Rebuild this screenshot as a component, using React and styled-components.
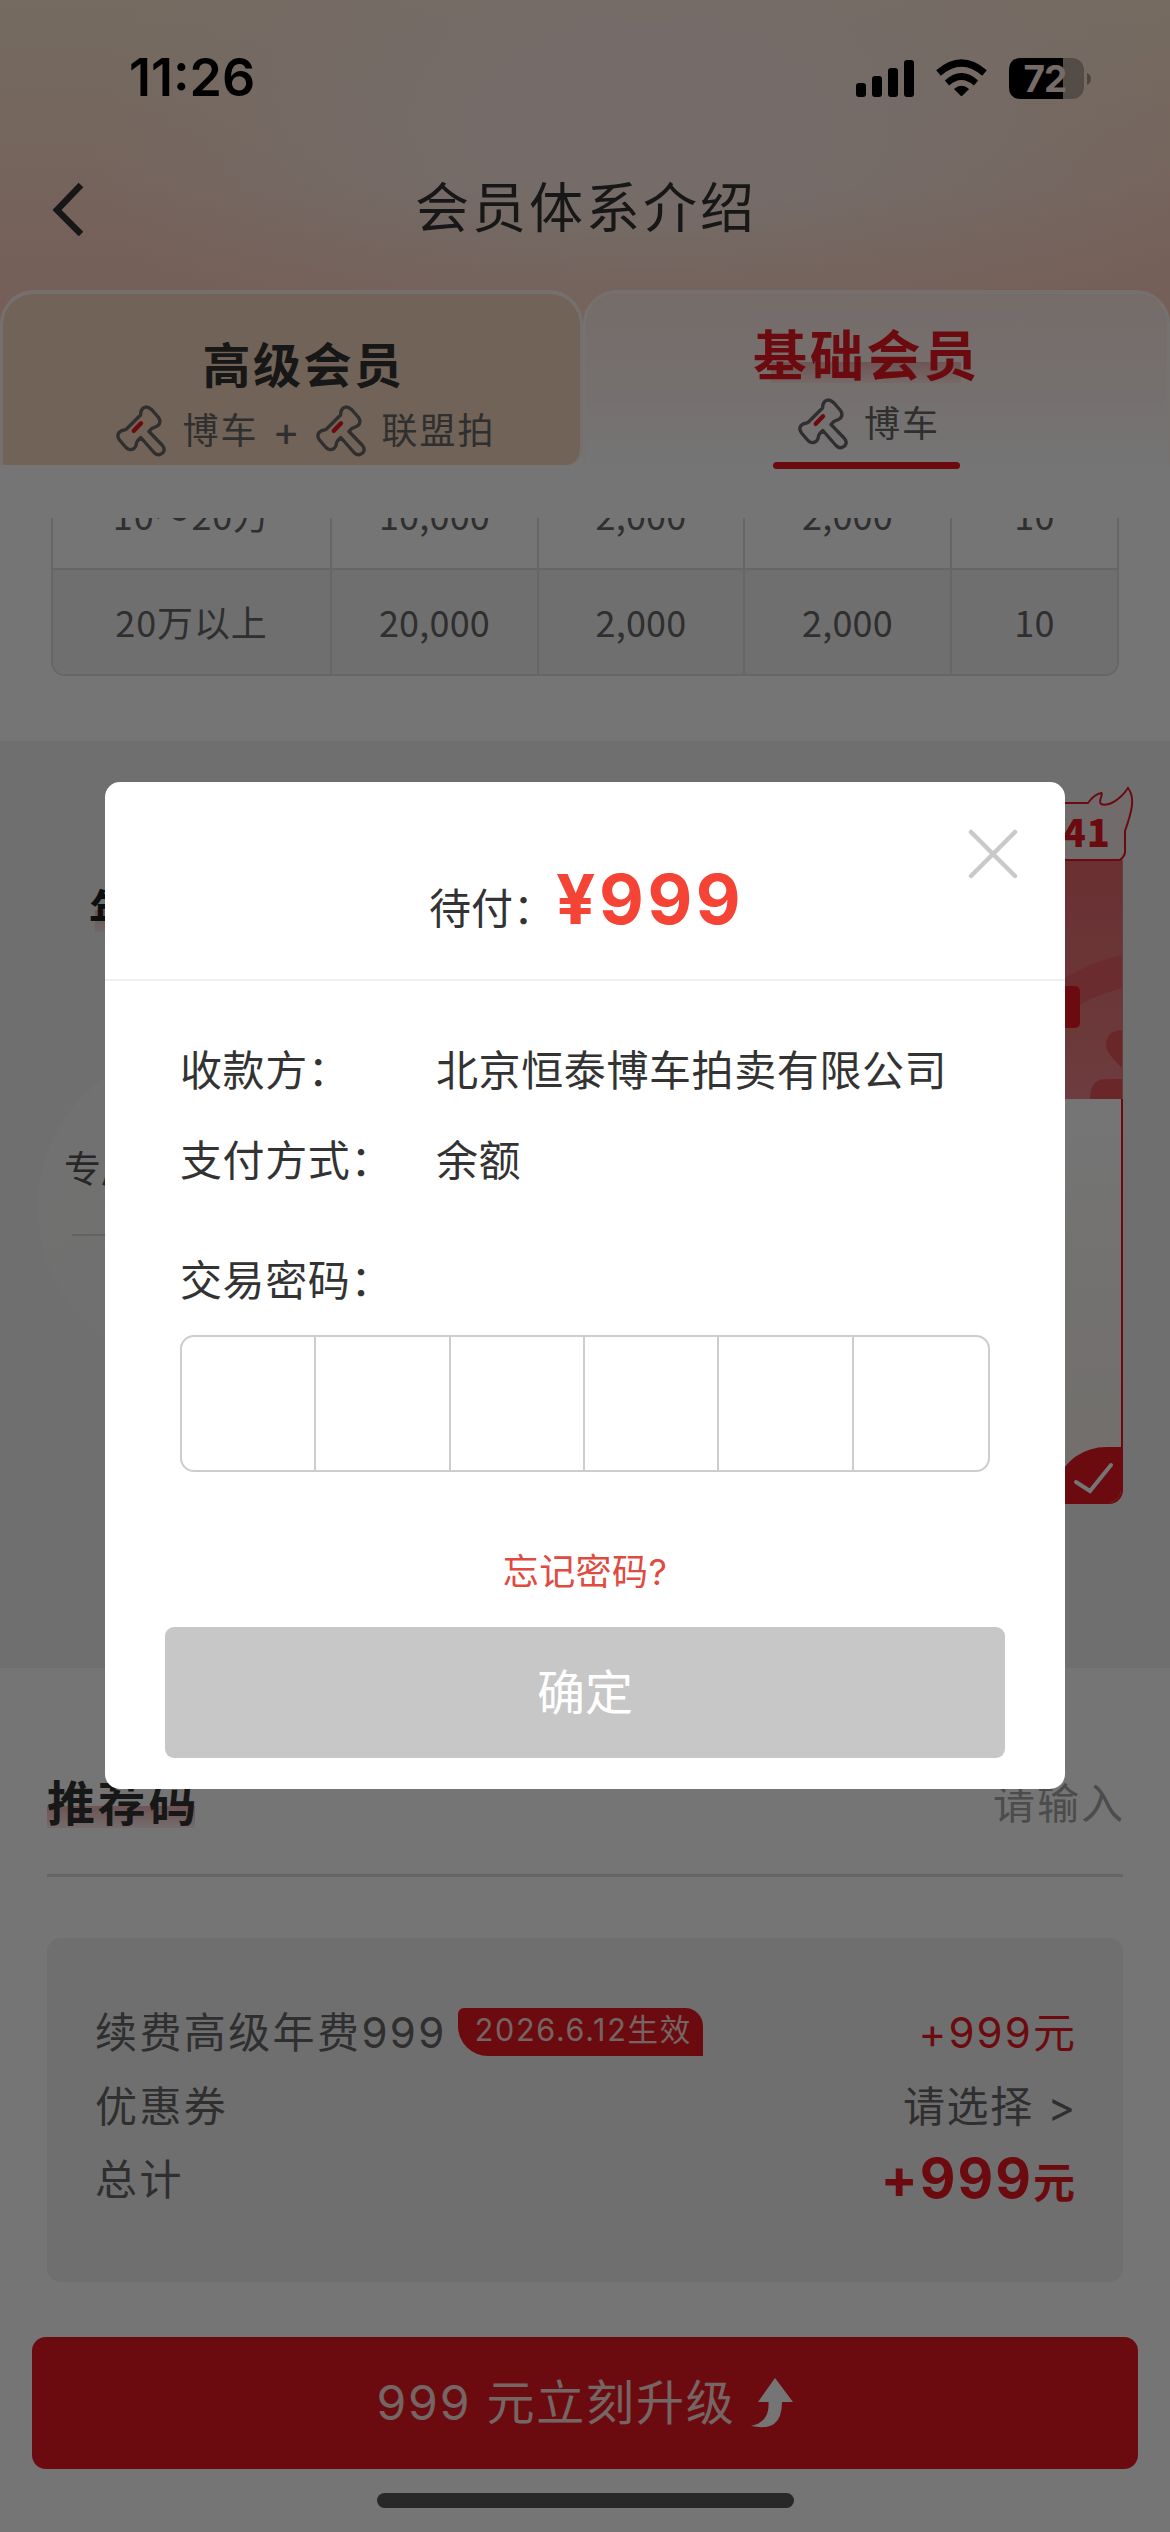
import React from "react";
import styled, { createGlobalStyle } from "styled-components";

const UI = `Inter, "Noto Sans CJK SC", sans-serif`;
const CJK = `"Noto Sans CJK SC", sans-serif`;
const RED = "#eb1a21";

const GlobalStyle = createGlobalStyle`
  * { box-sizing: border-box; }
  body { margin: 0; background: #fff; font-family: ${UI}; color: #333; }
`;

const Screen = styled.main`
  position: relative;
  display: flex;
  flex-direction: column;
  width: 1170px;
  height: 2532px;
  overflow: hidden;
  background: #fff;
`;

const Header = styled.header`
  height: 465px;
  flex: none;
  background:
    linear-gradient(180deg, transparent 40%, rgba(255, 207, 190, 0.55) 63%),
    radial-gradient(ellipse 560px 330px at 650px 130px, #feece4 30%, rgba(254, 234, 222, 0) 100%),
    linear-gradient(180deg, #ffe9d2 0%, #ffd8c8 45%, #ffcfc2 70%);
`;

const StatusBar = styled.div`
  display: flex;
  align-items: center;
  justify-content: space-between;
  height: 156px;
  padding: 0 79px 0 129px;
  color: #000;
`;

const Clock = styled.span`
  font: 600 52px/60px ${UI};
  letter-spacing: 0;
`;

const Nav = styled.div`
  display: grid;
  grid-template-columns: 170px 1fr 170px;
  align-items: center;
  height: 100px;
  padding: 5px 0 0 52px;
`;

const NavTitle = styled.h1`
  margin: 0 50px 0 0;
  text-align: center;
  font: 400 54px/70px ${UI};
  letter-spacing: 3px;
  white-space: nowrap;
`;

const Tabs = styled.div`
  display: grid;
  grid-template-columns: 583px 587px;
  height: 175px;
  margin-top: 34px;
  background: linear-gradient(180deg, rgba(255,255,255,0) 55%, #fff 56%);
`;

const Tab = styled.div`
  display: flex;
  flex-direction: column;
  align-items: center;
  height: 175px;
  padding: ${(p) => (p.$active ? "32px 20px 0 0" : "43px 0 0 24px")};
  border: 3px solid #fff3ee;
  border-top-width: 4px;
  border-bottom: 0;
  border-radius: ${(p) => (p.$active ? "34px 34px 0 0" : "34px 34px 16px 0")};
  background: ${(p) =>
    p.$active
      ? "linear-gradient(180deg, #ffece7 0%, #fff2ee 50%, #fffefe 100%)"
      : "#f6d8bf"};
  background-clip: padding-box;
  ${(p) => p.$active && "border-color: #fff3ee #fff8f5 #fff #fff8f5;"}
`;

const TabTitle = styled.h2`
  flex: none;
  margin: 0;
  font: 700 ${(p) => (p.$active ? 54 : 48)}px/${(p) => (p.$active ? 62 : 58)}px ${UI};
  letter-spacing: ${(p) => (p.$active ? 2.8 : 2.5)}px;
  color: ${(p) => (p.$active ? RED : "#333")};
  background: ${(p) =>
    p.$active
      ? "linear-gradient(180deg, #f0b9b8, #ffe6e3) 50% 36px / 190px 21px no-repeat"
      : "none"};
`;

const TabMeta = styled.div`
  display: flex;
  flex: none;
  align-items: center;
  gap: 16px;
  height: 56px;
  margin: ${(p) => p.$offset}px 0 0 5px;
  font: 400 36px/50px ${UI};
  letter-spacing: 2px;
  color: #666;
`;

const Plus = styled.span`
  margin-left: -2px;
  font-size: 41px;
  letter-spacing: 0;
`;

const TabLine = styled.i`
  flex: none;
  width: 187px;
  height: 7px;
  margin-top: 10px;
  border-radius: 4px;
  background: ${RED};
`;

const TableClip = styled.section`
  flex: none;
  height: 223px;
  margin-top: 53px;
  padding: 0 51px;
  overflow: hidden;
`;

const Table = styled.div`
  margin-top: -59px;
  border: 2px solid #dedee0;
  border-radius: 0 0 14px 14px;
  overflow: hidden;
`;

const Row = styled.div`
  display: grid;
  grid-template-columns: 279px 207px 206px 207px 1fr;
  height: ${(p) => (p.$last ? 104 : 109)}px;
  background: ${(p) => (p.$last ? "#f2f2f5" : "#fff")};
  border-bottom: ${(p) => (p.$last ? "0" : "2px solid #dedee0")};
`;

const Cell = styled.div`
  display: flex;
  align-items: center;
  justify-content: center;
  padding-bottom: 2px;
  border-right: 2px solid #dedee0;
  font: 400 36px/50px ${CJK};
  letter-spacing: ${(p) => (p.$wide ? 0.9 : 0.2)}px;
  color: #666;
  &:last-child { border-right: 0; }
`;

const Plans = styled.section`
  display: flex;
  justify-content: space-between;
  flex: none;
  height: 927px;
  padding: 62px 47px 0 38px;
  background: #f2f2f5;
`;

const PlanLeft = styled.div`
  width: 320px;
  padding-top: 79px;
`;

const PlanName = styled.h3`
  width: fit-content;
  margin: 0 0 0 51px;
  font: 700 44px/58px ${UI};
  color: #222;
  background: linear-gradient(180deg, #e9b6b6, #f2e4e6) 6px 28px / 100% 22px no-repeat;
`;

const Circle = styled.div`
  height: 320px;
  margin-top: 107px;
  padding: 97px 0 0 26px;
  border-radius: 50%;
  background: linear-gradient(160deg, #f8f8f7, #f4f3f3);
  font: 400 37px/52px ${UI};
  color: #555;
`;

const CircleRule = styled.i`
  display: block;
  width: 250px;
  height: 2px;
  margin: 38px 0 0 8px;
  background: #d6d6d6;
`;

const PlanCard = styled.div`
  position: relative;
  display: flex;
  flex-direction: column;
  width: 320px;
  height: 701px;
  padding-top: 57px;
`;

const PlanArt = styled.svg`
  flex: none;
  width: 320px;
  height: 239px;
`;

const PlanBody = styled.div`
  display: flex;
  flex: 1;
  align-items: flex-end;
  justify-content: flex-end;
  border: 2px solid ${RED};
  border-top: 0;
  border-radius: 0 0 14px 14px;
  background: linear-gradient(180deg, #fff, #f7efe9);
  overflow: hidden;
`;

const Badge = styled.div`
  position: absolute;
  top: -17px;
  left: 180px;
  width: 154px;
  height: 76px;
  svg { position: absolute; inset: 0; }
  span {
    position: relative;
    display: block;
    padding: 18px 26px 0 0;
    text-align: right;
    font: 900 38px/54px ${CJK};
    letter-spacing: 1px;
    color: ${RED};
  }
`;

const Referral = styled.section`
  display: flex;
  flex: none;
  align-items: flex-start;
  justify-content: space-between;
  height: 209px;
  margin: 0 47px;
  padding-top: 104px;
  border-bottom: 3px solid #ddd;
`;

const ReferralTitle = styled.h3`
  margin: 0;
  font: 700 48px/64px ${UI};
  letter-spacing: 2.8px;
  background: linear-gradient(180deg, #f0b5b5, #fdecec) 0 34px / 148px 22px no-repeat;
`;

const ReferralInput = styled.span`
  font: 400 42px/64px ${UI};
  letter-spacing: 2px;
  margin-right: -2px;
  color: #a5a5a5;
`;

const Summary = styled.section`
  flex: none;
  height: 344px;
  margin: 61px 47px 0;
  padding: 58px 48px 0;
  border-radius: 14px;
  background: #f2f2f5;
`;

const SummaryRow = styled.div`
  display: flex;
  align-items: center;
  height: ${(p) => p.$h || 74}px;
  font: 400 42px/60px ${UI};
  letter-spacing: 2.4px;
  color: #666;
`;

const Tag = styled.span`
  height: 48px;
  margin: -3px 0 0 11px;
  padding: 0 11px 0 17px;
  border-radius: 6px 18px 0 30px;
  background: ${RED};
  font: 400 30.500px/44px ${UI};
  letter-spacing: 1.7px;
  color: #ffd9d9;
`;

const Amount = styled.span`
  margin: 0 -2px 0 auto;
  color: ${(p) => (p.$plain ? "#666" : RED)};
  font-weight: ${(p) => (p.$bold ? 700 : 400)};
  letter-spacing: ${(p) => (p.$plain ? 1.7 : 2.1)}px;
  big { font-size: 55px; letter-spacing: 2px; }
`;

const PayBar = styled.button`
  display: flex;
  flex: none;
  align-items: center;
  justify-content: center;
  gap: 14px;
  height: 132px;
  margin: 55px 32px 0;
  padding: 0;
  border: 0;
  border-radius: 14px;
  background: ${RED};
  color: #ffdcdc;
  font: 400 48px/60px ${UI};
  letter-spacing: 1.8px;
`;

const HomeBar = styled.i`
  flex: none;
  align-self: center;
  width: 417px;
  height: 15px;
  margin-top: 24px;
  border-radius: 8px;
  background: #575757;
`;

const Overlay = styled.div`
  position: absolute;
  inset: 0;
  display: flex;
  justify-content: center;
  align-items: flex-start;
  padding-top: 782px;
  background: rgba(0, 0, 0, 0.54);
`;

const Modal = styled.div`
  position: relative;
  width: 960px;
  height: 1007px;
  border-radius: 15px;
  background: #fff;
`;

const Close = styled.svg`
  position: absolute;
  top: 45px;
  right: 45px;
`;

const Due = styled.div`
  display: flex;
  align-items: baseline;
  height: 199px;
  padding: 75px 0 0 324px;
  border-bottom: 2px solid #f0f0f0;
  font: 400 42px/84px ${UI};
`;

const DuePrice = styled.strong`
  margin-left: 1px;
  font-weight: 700;
  font-size: 69px;
  color: #f54336;
  letter-spacing: 3.6px;
`;

const ModalBody = styled.div`
  padding: 45px 76px 0;
`;

const Field = styled.div`
  display: grid;
  grid-template-columns: 256px 1fr;
  height: 90px;
  margin-left: -1px;
  font: 400 42px/90px ${UI};
  letter-spacing: 0.6px;
  white-space: nowrap;
`;

const FieldGap = styled.div`
  height: 30px;
`;

const Pins = styled.div`
  display: grid;
  grid-template-columns: repeat(6, 1fr);
  height: 137px;
  margin: 9px -1px 0;
  border: 2px solid #cdcdcd;
  border-radius: 14px;
`;

const Pin = styled.i`
  border-right: 2px solid #cdcdcd;
  &:last-child { border-right: 0; }
`;

const Forgot = styled.div`
  margin-top: 75px;
  text-align: center;
  font: 400 36px/50px ${UI};
  letter-spacing: 0.4px;
  color: #e04a3f;
`;

const Confirm = styled.button`
  display: block;
  width: 840px;
  height: 131px;
  margin: 30px 0 0 -16px;
  border: 0;
  border-radius: 9px;
  background: #c7c7c7;
  color: #fff;
  font: 400 48px/60px ${UI};
`;

const Gavel = () => (
  <svg width="50" height="52" viewBox="0 0 50 52" fill="none" strokeLinecap="round" strokeLinejoin="round">
    <path
      d="M24.500 10 C24.500 5 27 2 30.500 2 C33 2 34.500 3.500 36 5 L42.500 12.500 C45 16 44 20 40.500 21.500 C38 22.500 36 22 33 26.500 L46.500 40.500 C49.500 44 48 48 45 49 C42 50.500 40 49.500 38 47.500 L24.800 32.500 L21.500 36 C19.500 38.500 21 41 18.500 43 C16 45.500 12.500 45 10 42.500 L3.500 35 C.800 31.500 1.500 28 5 26 C7 25 9 25.500 10.500 24 Z"
      stroke="#666"
      strokeWidth="3.400"
    />
    <path d="M17.800 25.800 L25 18.300" stroke={RED} strokeWidth="4.500" />
  </svg>
);

const StatusIcons = () => (
  <svg width="238" height="46" viewBox="853 54 238 46">
    <rect x="856" y="82" width="10" height="14" rx="3" />
    <rect x="872" y="75" width="10" height="21" rx="3" />
    <rect x="888" y="67" width="10" height="29" rx="3" />
    <rect x="904" y="59" width="10" height="37" rx="3" />
    <path d="M961.500 95 L954.500 88 Q961.500 82.500 968.500 88 Z" stroke="#000" strokeLinejoin="round" />
    <path d="M947 82 Q961.500 69 976 82" fill="none" stroke="#000" strokeWidth="6.500" />
    <path d="M938.500 72 Q961.500 52 984.500 72" fill="none" stroke="#000" strokeWidth="7" />
    <rect x="1009" y="57" width="75" height="41" rx="12" fill="#000" opacity=".28" />
    <path d="M1063 57 H1021 Q1009 57 1009 69 V86 Q1009 98 1021 98 H1063 Z" />
    <path d="M1087 72 Q1091 74 1091 77.500 Q1091 82 1087 84 Z" opacity=".35" />
    <text x="1045" y="91" textAnchor="middle" fontFamily="Inter" fontWeight="700" fontSize="37" fill="#feeae0" letterSpacing="-1">72</text>
  </svg>
);

const ROWS = [
  ["10～20万", "10,000", "2,000", "2,000", "10"],
  ["20万以上", "20,000", "2,000", "2,000", "10"],
];

export default function App() {
  return (
    <Screen>
      <GlobalStyle />
      <Header>
        <StatusBar>
          <Clock>11:26</Clock>
          <StatusIcons />
        </StatusBar>
        <Nav>
          <svg width="34" height="54" viewBox="0 0 34 54" fill="none" stroke="#333" strokeWidth="6.500">
            <path d="M29 3 L5 28 L29 52" />
          </svg>
          <NavTitle>会员体系介绍</NavTitle>
        </Nav>
        <Tabs>
          <Tab>
            <TabTitle>高级会员</TabTitle>
            <TabMeta $offset={8}>
              <Gavel />
              <span>博车</span>
              <Plus>+</Plus>
              <Gavel />
              <span>联盟拍</span>
            </TabMeta>
          </Tab>
          <Tab $active>
            <TabTitle $active>基础会员</TabTitle>
            <TabMeta $offset={8}>
              <Gavel />
              <span>博车</span>
            </TabMeta>
            <TabLine />
          </Tab>
        </Tabs>
      </Header>

      <TableClip>
        <Table>
          {ROWS.map((row, r) => (
            <Row key={r} $last={r === 1}>
              {row.map((text, c) => (
                <Cell key={c} $wide={c === 0}>
                  {text}
                </Cell>
              ))}
            </Row>
          ))}
        </Table>
      </TableClip>

      <Plans>
        <PlanLeft>
          <PlanName>年费</PlanName>
          <Circle>
            专属
            <CircleRule />
          </Circle>
        </PlanLeft>
        <PlanCard>
          <PlanArt viewBox="0 0 320 239">
            <defs>
              <linearGradient id="art" x1="0" y1="0" x2="0" y2="1">
                <stop offset="0" stopColor="#e6686c" />
                <stop offset="1" stopColor="#ee8488" />
              </linearGradient>
            </defs>
            <rect width="320" height="239" fill="url(#art)" />
            <path d="M250 125 Q285 102 320 95 V128 Q290 135 262 153 Z" fill="#e66068" />
            <path d="M320 170 Q303 170 303 186 Q304 194 320 209 Z" fill="#e4565c" />
            <path d="M287 239 Q287 219 303 219 H320 V239 Z" fill="#e4565c" />
            <rect x="120" y="126" width="157" height="42" rx="5" fill={RED} />
            <path d="M319.500 0 V239" stroke="#ea8085" />
          </PlanArt>
          <PlanBody>
            <svg width="90" height="55" viewBox="0 0 90 55">
              <path d="M90 0 H76 Q40 0 23 38 Q15 55 5 55 H90 Z" fill={RED} />
              <path d="M45 35 L59 44 L80 18" fill="none" stroke="#fff" strokeWidth="4" strokeLinecap="round" />
            </svg>
          </PlanBody>
          <Badge>
            <svg width="154" height="76" viewBox="983 786 154 76" fill="#f6ecea" stroke={RED} strokeWidth="2">
              <path d="M990 803 H1088 C1093 796 1098 793.500 1101.500 793 C1103 796 1098 800 1101 804 C1108 807 1120 800 1128 788 C1136 798 1131 814 1125 831 V853 Q1124 857 1120 860 H990 Z" />
            </svg>
            <span>41</span>
          </Badge>
        </PlanCard>
      </Plans>

      <Referral>
        <ReferralTitle>推荐码</ReferralTitle>
        <ReferralInput>请输入</ReferralInput>
      </Referral>

      <Summary>
        <SummaryRow>
          续费高级年费999
          <Tag>2026.6.12生效</Tag>
          <Amount>+999元</Amount>
        </SummaryRow>
        <SummaryRow>
          优惠券
          <Amount $plain>请选择 &gt;</Amount>
        </SummaryRow>
        <SummaryRow $h={72}>
          总计
          <Amount $bold>
            <big>+999</big>元
          </Amount>
        </SummaryRow>
      </Summary>

      <PayBar>
        999 元立刻升级
        <svg width="44" height="50" viewBox="0 0 44 50" fill="#fff">
          <path d="M25 0 L43 24 H32 Q32 40 24 46 Q17 51 1 48 Q12 46 16 38 Q19 33 18.500 24 H8 Z" />
        </svg>
      </PayBar>
      <HomeBar />

      <Overlay>
        <Modal>
          <Close width="54" height="54" viewBox="0 0 54 54" stroke="#c9c9c9" strokeWidth="4.500" strokeLinecap="round">
            <path d="M5 5 L49 49 M49 5 L5 49" />
          </Close>
          <Due>
            <span>待付：</span>
            <DuePrice>¥999</DuePrice>
          </Due>
          <ModalBody>
            <Field>
              <span>收款方：</span>
              <span>北京恒泰博车拍卖有限公司</span>
            </Field>
            <Field>
              <span>支付方式：</span>
              <span>余额</span>
            </Field>
            <FieldGap />
            <Field>
              <span>交易密码：</span>
            </Field>
            <Pins>
              {[0, 1, 2, 3, 4, 5].map((i) => (
                <Pin key={i} />
              ))}
            </Pins>
            <Forgot>忘记密码?</Forgot>
            <Confirm>确定</Confirm>
          </ModalBody>
        </Modal>
      </Overlay>
    </Screen>
  );
}
